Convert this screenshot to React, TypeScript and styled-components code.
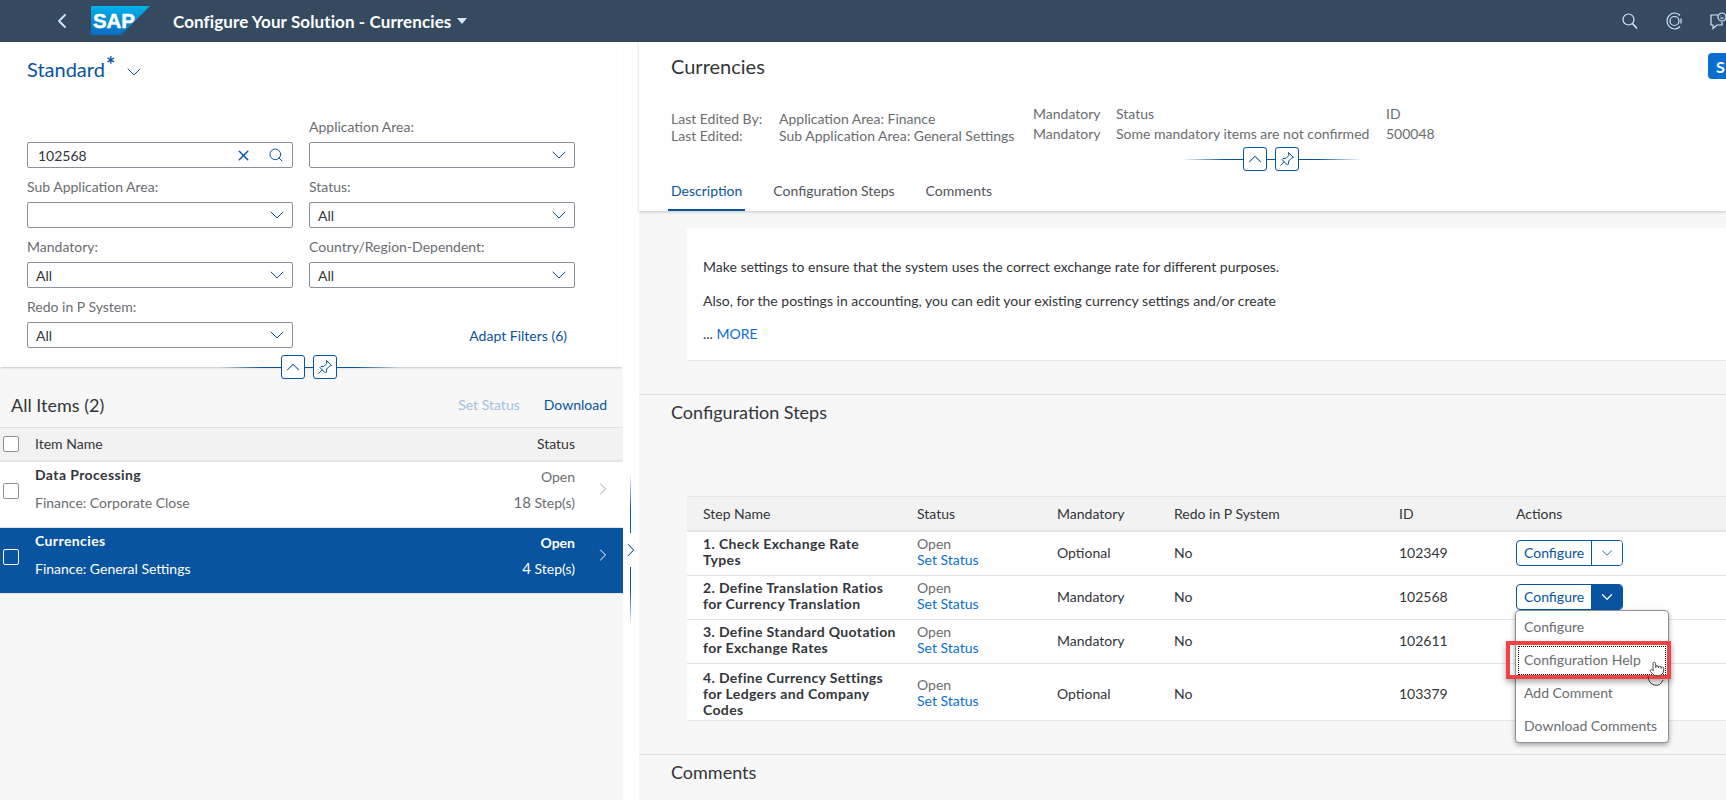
import React from "react";
import styled, { createGlobalStyle } from "styled-components";
import { ChevronDown, ChevronLeft, ChevronRight, ChevronUp, Pointer, Search, X } from "lucide-react";

const Global = createGlobalStyle`
  html, body { margin: 0; height: 100%; overflow: hidden; background: #fff; }
  body { font-family: Lato, "Liberation Sans", sans-serif; font-size: 14px; color: #32363a; }
  * { box-sizing: border-box; }
`;

const Shell = styled.div`display: flex; flex-direction: column; height: 100vh; width: 100vw; overflow: hidden;`;

const ShellBar = styled.header`
  height: 42px; flex: none; background: #354a5f; display: flex; align-items: center; padding-left: 50px; color: #fff;
`;
const BackIcon = styled(ChevronLeft)`color: #d1e8ff; flex: none;`;
const Logo = styled.svg`margin-left: 17px; width: 59px; height: 29px; flex: none; margin-top: -1px;`;
const AppTitle = styled.div`margin-left: 23px; font-size: 17px; font-weight: 700; white-space: nowrap; letter-spacing: .1px;`;
const TitleCaret = styled.span`
  margin-left: 6px; width: 0; height: 0; border-left: 5px solid transparent; border-right: 5px solid transparent; border-top: 6px solid #d1e8ff;
`;
const ShellIcons = styled.div`margin-left: auto; display: flex; align-items: center; margin-right: -1px;`;
const ShellIcon = styled.svg`width: 18px; height: 18px; margin-left: 26px; fill: none; stroke: #d1e8ff; stroke-width: 1.2; flex: none;`;

const Body = styled.div`flex: 1; display: grid; grid-template-columns: 623px 16px 1fr; min-height: 0;`;

const LeftPanel = styled.section`background: #f7f7f7; display: flex; flex-direction: column;`;
const FilterBar = styled.div`
  background: #fff; position: relative; padding: 14px 0 19px 27px; box-shadow: 0 2px 2px -1px rgba(0,0,0,.2);
`;
const VariantRow = styled.div`display: flex; align-items: center; height: 26px; color: #0854a0; font-size: 20px;`;
const Star = styled.span`font-size: 22px; font-weight: 700; line-height: 14px; margin-left: 1px; align-self: flex-start; margin-top: 2px;`;
const VariantChevron = styled(ChevronDown)`margin-left: 7px; margin-top: 6px;`;
const FilterGrid = styled.div`
  margin-top: 26px; display: grid; grid-template-columns: 266px 266px; column-gap: 16px; grid-auto-rows: 60px;
`;
const Field = styled.div`display: flex; flex-direction: column; justify-content: flex-end;`;
const FieldLabel = styled.label`color: #6a6d70; font-size: 14px; line-height: 18px; margin-bottom: 6px;`;
const Control = styled.div`
  height: 26px; border: 1px solid #89919a; border-radius: 2px; background: #fff; display: flex; align-items: center;
  padding: 0 3px 0 8px; color: #32363a; font-size: 14px;
`;
const ControlValue = styled.span<{ $inset?: boolean }>`flex: 1; padding-left: ${p => (p.$inset ? 2 : 0)}px;`;
const BlueChevron = styled(ChevronDown)`color: #0854a0; flex: none;`;
const SearchActions = styled.div`display: flex; align-items: center; gap: 16px; color: #0854a0; margin-right: 5px;`;
const AdaptFilters = styled.div`
  align-self: end; height: 26px; display: flex; align-items: center; justify-content: flex-end; padding-right: 8px; color: #0854a0; font-size: 14px;
`;

const CollapseBar = styled.div<{ $left: number; $bottom: number }>`
  position: absolute; left: ${p => p.$left}px; bottom: ${p => p.$bottom}px; display: flex; align-items: center; z-index: 3;
`;
const HeaderLine = styled.span<{ $dir: "left" | "right"; $w: number }>`
  width: ${p => p.$w}px; height: 1px;
  background: linear-gradient(to ${p => p.$dir}, rgba(8,84,160,0), #0854a0 70%);
`;
const Connector = styled.span`width: 8px; height: 1px; background: #0854a0;`;
const CollapseButton = styled.button`
  width: 24px; height: 24px; padding: 0; border: 1px solid #0854a0; border-radius: 3px; background: #fff; color: #0854a0;
  display: flex; align-items: center; justify-content: center;
`;
const PinIcon = styled.svg`width: 16px; height: 16px; fill: none; stroke: #0854a0; stroke-width: 1;`;

const ListToolbar = styled.div`height: 60px; padding: 24px 16px 9px 11px; display: flex; align-items: center; gap: 24px;`;
const ListTitle = styled.h2`margin: 0; margin-right: auto; font-size: 18px; font-weight: 400; color: #32363a;`;
const ToolLink = styled.a<{ $off?: boolean }>`color: ${p => (p.$off ? "#a3c1de" : "#0854a0")}; font-size: 14px;`;

const ListGrid = styled.div`
  display: grid; grid-template-columns: 16px 1fr auto 48px; column-gap: 0; padding-left: 3px; align-items: center;
`;
const ListHead = styled(ListGrid)`
  height: 35px; padding-bottom: 1px; background: #f2f2f2; border-top: 1px solid #e0e0e0; border-bottom: 2px solid #e5e5e5; color: #32363a;
`;
const ListRow = styled(ListGrid)<{ $selected?: boolean }>`
  height: 66px; padding-bottom: 1px; border-bottom: 1px solid #e5e5e5;
  background: ${p => (p.$selected ? "#0854a0" : "#fff")}; color: ${p => (p.$selected ? "#fff" : "#32363a")};
`;
const Check = styled.span<{ $light?: boolean; $lift?: number }>`
  width: 16px; height: 16px; display: block; border-radius: 2px; margin-top: ${p => p.$lift ?? 0}px;
  border: 1px solid ${p => (p.$light ? "#fff" : "#89919a")}; background: ${p => (p.$light ? "transparent" : "#fff")};
`;
const NameCell = styled.div`padding-left: 16px; color: inherit;`;
const Stack = styled.div<{ $right?: boolean }>`
  display: flex; flex-direction: column; line-height: 20px;
  gap: ${p => (p.$right ? 5 : 8)}px; margin-top: ${p => (p.$right ? -8 : -11)}px; text-align: ${p => (p.$right ? "right" : "left")};
`;
const ItemName = styled.strong`font-weight: 700; letter-spacing: .4px;`;
const Muted = styled.span`color: #6a6d70;`;
const OnBlue = styled.span<{ $strong?: boolean }>`color: #fff; font-weight: ${p => (p.$strong ? 700 : 400)};`;
const Count = styled.span`font-size: 15px;`;
const RowChevron = styled(ChevronRight)<{ $selected?: boolean }>`margin-left: 18px; margin-top: -11px; color: ${p => (p.$selected ? "#fff" : "#89919a")};`;

const Gutter = styled.div`background: #fff; display: flex; flex-direction: column; align-items: center; padding-top: 432px; padding-right: 1px;`;
const GutterLine = styled.span<{ $dir: "top" | "bottom" }>`
  width: 1px; height: 59px; background: linear-gradient(to ${p => p.$dir}, rgba(8,84,160,0), #0854a0 60%);
`;
const GutterButton = styled.div`height: 34px; display: flex; align-items: center; justify-content: center; color: #0854a0;`;

const RightPanel = styled.section`display: flex; flex-direction: column; min-width: 0; background: #f7f7f7;`;
const ObjectHeader = styled.div`
  background: #fff; position: relative; padding: 11px 0 0 32px; height: 169px; box-shadow: 0 1px 3px rgba(0,0,0,.2); z-index: 2;
`;
const TitleRow = styled.div`display: flex; align-items: center; justify-content: space-between; height: 26px;`;
const ObjectTitle = styled.h1`margin: 0; font-size: 20px; font-weight: 400; color: #32363a;`;
const SaveButton = styled.button`
  width: 60px; margin-right: -42px; height: 26px; padding: 0 0 0 8px; text-align: left; border: 0; border-radius: 4px; background: #0a6ed1; color: #fff;
  font: 700 16px Lato, sans-serif;
`;
const Attributes = styled.div`
  margin-top: 25px; display: grid; grid-template-columns: 108px 254px 83px 270px auto; align-items: end; color: #6a6d70;
`;
const AttrColumn = styled.div<{ $lh: number }>`display: flex; flex-direction: column; line-height: ${p => p.$lh}px; white-space: nowrap;`;
const Tabs = styled.nav`position: absolute; left: 29px; bottom: 0; display: flex; gap: 25px; height: 38px;`;
const Tab = styled.a<{ $on?: boolean }>`
  padding: 0 3px; height: 38px; line-height: 36px; color: ${p => (p.$on ? "#0854a0" : "#515559")};
  border-bottom: 2px solid ${p => (p.$on ? "#0854a0" : "transparent")};
`;

const Scroll = styled.div`flex: 1; min-height: 0; overflow: hidden;`;
const DescCard = styled.div`
  margin: 17px 0 0 48px; height: 133px; background: #fff; border-bottom: 1px solid #e5e5e5; padding: 29px 0 0 16px; line-height: 20px;
`;
const Para = styled.p<{ $gap: number }>`margin: 0 0 ${p => p.$gap}px; white-space: nowrap;`;
const MoreLink = styled.a`color: #0a6ed1;`;
const Section = styled.div`margin-top: 33px; border-top: 1px solid #e0e0e0; padding-top: 5px;`;
const SectionTitle = styled.h2`margin: 0 0 0 32px; font-size: 18px; line-height: 24px; font-weight: 400; color: #32363a;`;
const StepsTable = styled.div`margin: 72px 0 0 48px;`;
const stepCols = "214px 140px 117px 225px 117px 1fr";
const StepHead = styled.div`
  display: grid; grid-template-columns: ${stepCols}; padding-left: 16px; align-items: center; height: 36px;
  background: #f2f2f2; border-top: 1px solid #e5e5e5; border-bottom: 2px solid #e5e5e5; color: #32363a;
`;
const StepRow = styled.div<{ $tall?: boolean }>`
  display: grid; grid-template-columns: ${stepCols}; align-items: center; min-height: ${p => (p.$tall ? 57 : 44)}px;
  padding: ${p => (p.$tall ? "6px 0 2px 16px" : "4px 0 4px 16px")};
  background: #fff; border-bottom: 1px solid #e5e5e5;
`;
const StepName = styled.div<{ $tall?: boolean }>`font-weight: 700; line-height: 16px; letter-spacing: .35px; margin-top: ${p => (p.$tall ? 0 : -3)}px;`;
const StatusCell = styled.div`display: flex; flex-direction: column; line-height: 16px; color: #6a6d70; margin-top: -3px;`;
const StatusLink = styled.a`color: #0a6ed1;`;
const PlainCell = styled.span`margin-top: -2px;`;
const ActionCell = styled.div`position: relative; z-index: 4; margin-top: -2px;`;
const Split = styled.div`display: flex; width: 107px; height: 26px; border: 1px solid #0854a0; border-radius: 4px; overflow: hidden; color: #0854a0; background: #fff;`;
const SplitMain = styled.span`width: 74px; line-height: 24px; padding-left: 7px;`;
const SplitArrow = styled.span<{ $on?: boolean }>`
  flex: 1; display: flex; align-items: center; justify-content: center; border-left: 1px solid #0854a0;
  background: ${p => (p.$on ? "#0854a0" : "#fff")}; color: ${p => (p.$on ? "#fff" : "#0854a0")};
`;
const Menu = styled.div`
  position: absolute; left: -1px; top: 100%; width: 154px; height: 133px; background: #fff;
  border: 1px solid #89919a; border-radius: 4px; box-shadow: 0 2px 5px rgba(0,0,0,.35); color: #6a6d70;
`;
const MenuItem = styled.div<{ $focus?: boolean }>`
  height: 33px; line-height: 32px; padding-left: 8px; position: relative;
  ${p => p.$focus && `&::after { content: ""; position: absolute; inset: 2px; border: 1px dotted #000; }`}
`;
const RedBox = styled.div`
  position: absolute; left: -10px; top: 30px; width: 165px; height: 38px; border: 4px solid #f04444; box-shadow: 0 3px 6px rgba(0,0,0,.35); z-index: 1;
`;
const CursorMark = styled.svg`position: absolute; left: 130px; top: 50px; width: 24px; height: 30px; z-index: 2; overflow: visible;`;
const Hand = styled(Pointer)`position: absolute; left: 133px; top: 50px; color: #32363a; fill: #fff; z-index: 3;`;

const FilterField = ({ label, value }: { label?: string; value?: string }) => (
  <Field>
    {label && <FieldLabel>{label}</FieldLabel>}
    <Control>
      <ControlValue>{value}</ControlValue>
      <BlueChevron size={24} strokeWidth={1} />
    </Control>
  </Field>
);

const PinGlyph = () => (
  <PinIcon viewBox="0 0 16 16">
    <path d="M9.500 1.500l5 5-2 .7-2.800 2.800-.3 3-1 1-5.400-5.400 1-1 3-.3 2.800-2.800z" />
    <path d="M5.500 10.500L1.500 14.500" />
  </PinIcon>
);

const Collapser = ({ left, bottom }: { left: number; bottom: number }) => (
  <CollapseBar $left={left} $bottom={bottom}>
    <HeaderLine $dir="right" $w={61} />
    <CollapseButton><ChevronUp size={24} strokeWidth={1.1} /></CollapseButton>
    <Connector />
    <CollapseButton><PinGlyph /></CollapseButton>
    <HeaderLine $dir="left" $w={63} />
  </CollapseBar>
);

const steps = [
  { lines: ["1. Check Exchange Rate", "Types"], mand: "Optional", id: "102349", button: true },
  { lines: ["2. Define Translation Ratios", "for Currency Translation"], mand: "Mandatory", id: "102568", button: true, open: true },
  { lines: ["3. Define Standard Quotation", "for Exchange Rates"], mand: "Mandatory", id: "102611" },
  { lines: ["4. Define Currency Settings", "for Ledgers and Company", "Codes"], mand: "Optional", id: "103379", tall: true },
];

export default function App() {
  return (
    <Shell>
      <Global />
      <ShellBar>
        <BackIcon size={24} strokeWidth={1.8} />
        <Logo viewBox="0 0 59 29">
          <defs>
            <linearGradient id="sapg" x1="0" y1="0" x2="0" y2="1">
              <stop offset="0" stopColor="#00b1eb" />
              <stop offset="1" stopColor="#0a6cc0" />
            </linearGradient>
          </defs>
          <polygon points="0,0 59,0 30,29 0,29" fill="url(#sapg)" />
          <text x="2" y="22" fill="#fff" stroke="#fff" strokeWidth="0.5" fontFamily="Liberation Sans, sans-serif" fontWeight="700" fontSize="21" textLength="42" lengthAdjust="spacingAndGlyphs">SAP</text>
        </Logo>
        <AppTitle>Configure Your Solution - Currencies</AppTitle>
        <TitleCaret />
        <ShellIcons>
          <ShellIcon viewBox="0 0 18 18"><circle cx="7.500" cy="7.500" r="5.500" /><path d="M11.500 11.500L16 16.500" strokeWidth="1.600" /></ShellIcon>
          <ShellIcon viewBox="0 0 18 18"><path d="M15 3.500A7.500 8 0 1 0 15 14.500" /><circle cx="9.500" cy="9" r="4.500" /><path d="M16 6.500v5" /></ShellIcon>
          <ShellIcon viewBox="0 0 18 18"><path d="M9 3H2v10h2v3.500L8 13h5v-3" /><circle cx="13" cy="5" r="4" /><path d="M11.500 4h.5M14 4h.5M11.500 6.200h3" /></ShellIcon>
        </ShellIcons>
      </ShellBar>
      <Body>
        <LeftPanel>
          <FilterBar>
            <VariantRow>
              Standard<Star>*</Star>
              <VariantChevron size={24} strokeWidth={1} />
            </VariantRow>
            <FilterGrid>
              <Field>
                <Control>
                  <ControlValue $inset>102568</ControlValue>
                  <SearchActions>
                    <X size={17} strokeWidth={2} />
                    <Search size={16} strokeWidth={1.5} />
                  </SearchActions>
                </Control>
              </Field>
              <FilterField label="Application Area:" />
              <FilterField label="Sub Application Area:" />
              <FilterField label="Status:" value="All" />
              <FilterField label="Mandatory:" value="All" />
              <FilterField label="Country/Region-Dependent:" value="All" />
              <FilterField label="Redo in P System:" value="All" />
              <AdaptFilters>Adapt Filters (6)</AdaptFilters>
            </FilterGrid>
            <Collapser left={220} bottom={-12} />
          </FilterBar>
          <ListToolbar>
            <ListTitle>All Items (2)</ListTitle>
            <ToolLink $off>Set Status</ToolLink>
            <ToolLink>Download</ToolLink>
          </ListToolbar>
          <ListHead>
            <Check />
            <NameCell>Item Name</NameCell>
            <div>Status</div>
            <span />
          </ListHead>
          <ListRow>
            <Check $lift={-6} />
            <NameCell>
              <Stack>
                <ItemName>Data Processing</ItemName>
                <Muted>Finance: Corporate Close</Muted>
              </Stack>
            </NameCell>
            <Stack $right>
              <Muted>Open</Muted>
              <Muted><Count>18</Count> Step(s)</Muted>
            </Stack>
            <RowChevron size={20} strokeWidth={1} />
          </ListRow>
          <ListRow $selected>
            <Check $light $lift={-6} />
            <NameCell>
              <Stack>
                <ItemName>Currencies</ItemName>
                <span>Finance: General Settings</span>
              </Stack>
            </NameCell>
            <Stack $right>
              <OnBlue $strong>Open</OnBlue>
              <OnBlue><Count>4</Count> Step(s)</OnBlue>
            </Stack>
            <RowChevron $selected size={20} strokeWidth={1.2} />
          </ListRow>
        </LeftPanel>
        <Gutter>
          <GutterLine $dir="bottom" />
          <GutterButton><ChevronRight size={22} strokeWidth={1.1} /></GutterButton>
          <GutterLine $dir="top" />
        </Gutter>
        <RightPanel>
          <ObjectHeader>
            <TitleRow>
              <ObjectTitle>Currencies</ObjectTitle>
              <SaveButton>S</SaveButton>
            </TitleRow>
            <Attributes>
              <AttrColumn $lh={17}><span>Last Edited By:</span><span>Last Edited:</span></AttrColumn>
              <AttrColumn $lh={17}><span>Application Area: Finance</span><span>Sub Application Area: General Settings</span></AttrColumn>
              <AttrColumn $lh={20}><span>Mandatory</span><span>Mandatory</span></AttrColumn>
              <AttrColumn $lh={20}><span>Status</span><span>Some mandatory items are not confirmed</span></AttrColumn>
              <AttrColumn $lh={20}><span>ID</span><span>500048</span></AttrColumn>
            </Attributes>
            <Collapser left={543} bottom={40} />
            <Tabs>
              <Tab $on>Description</Tab>
              <Tab>Configuration Steps</Tab>
              <Tab>Comments</Tab>
            </Tabs>
          </ObjectHeader>
          <Scroll>
            <DescCard>
              <Para $gap={14}>Make settings to ensure that the system uses the correct exchange rate for different purposes.</Para>
              <Para $gap={13}>Also, for the postings in accounting, you can edit your existing currency settings and/or create</Para>
              <Para $gap={0}>... <MoreLink>MORE</MoreLink></Para>
            </DescCard>
            <Section>
              <SectionTitle>Configuration Steps</SectionTitle>
              <StepsTable>
                <StepHead>
                  <span>Step Name</span><span>Status</span><span>Mandatory</span><span>Redo in P System</span><span>ID</span><span>Actions</span>
                </StepHead>
                {steps.map(s => (
                  <StepRow key={s.id} $tall={s.tall}>
                    <StepName $tall={s.tall}>{s.lines.map(l => <div key={l}>{l}</div>)}</StepName>
                    <StatusCell><span>Open</span><StatusLink>Set Status</StatusLink></StatusCell>
                    <PlainCell>{s.mand}</PlainCell>
                    <PlainCell>No</PlainCell>
                    <PlainCell>{s.id}</PlainCell>
                    {s.button ? (
                      <ActionCell>
                        <Split>
                          <SplitMain>Configure</SplitMain>
                          <SplitArrow $on={s.open}><ChevronDown size={18} strokeWidth={s.open ? 1.6 : 1.1} /></SplitArrow>
                        </Split>
                        {s.open && (
                          <Menu>
                            <MenuItem>Configure</MenuItem>
                            <MenuItem $focus>Configuration Help</MenuItem>
                            <MenuItem>Add Comment</MenuItem>
                            <MenuItem>Download Comments</MenuItem>
                            <RedBox />
                            <CursorMark viewBox="0 0 24 30"><path d="M2 15a8 10 0 0 0 15 4" fill="none" stroke="#32363a" strokeWidth="1" /></CursorMark>
                            <Hand size={16} strokeWidth={1.3} />
                          </Menu>
                        )}
                      </ActionCell>
                    ) : <span />}
                  </StepRow>
                ))}
              </StepsTable>
            </Section>
            <Section>
              <SectionTitle>Comments</SectionTitle>
            </Section>
          </Scroll>
        </RightPanel>
      </Body>
    </Shell>
  );
}
